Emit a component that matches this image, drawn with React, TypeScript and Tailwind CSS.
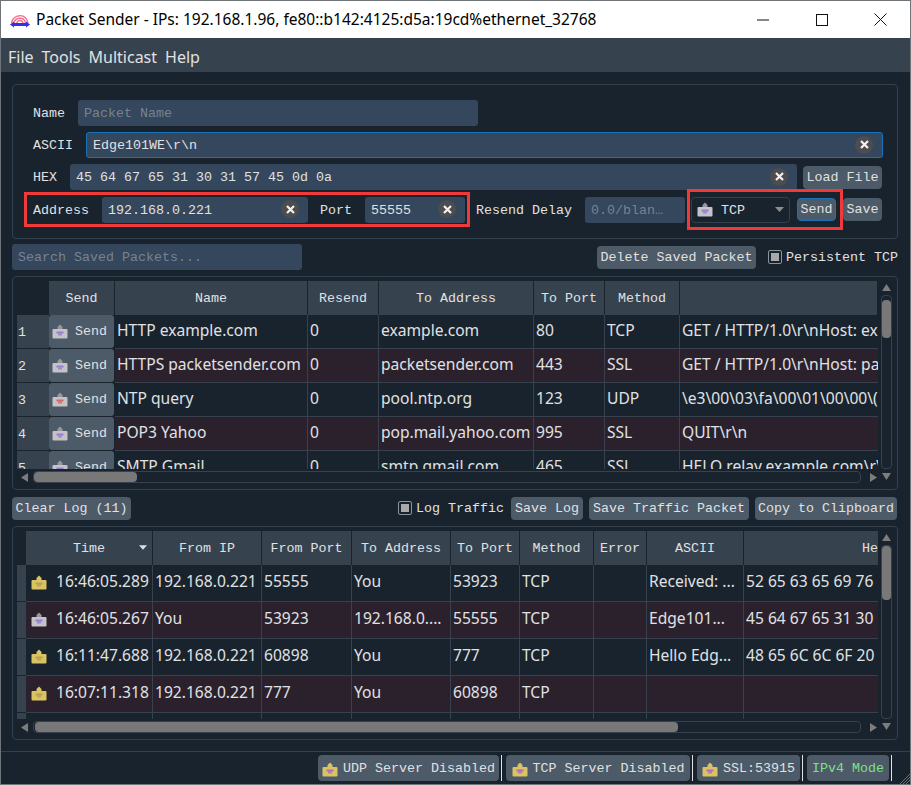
import type { ReactNode } from "react";

const ui = "font-['Noto_Sans',sans-serif]";
const mono = "font-['Liberation_Mono',monospace] text-[13.33px]";
const packetCols = "grid-cols-[32px_66px_193px_71px_155px_71px_75px_198px]";
const logCols = "grid-cols-[9px_127px_109px_90px_99px_69px_74px_53px_97px_134px]";

const packets = [
    ["HTTP example.com", "0", "example.com", "80", "TCP", "GET / HTTP/1.0\\r\\nHost: ex"],
    ["HTTPS packetsender.com", "0", "packetsender.com", "443", "SSL", "GET / HTTP/1.0\\r\\nHost: pa"],
    ["NTP query", "0", "pool.ntp.org", "123", "UDP", "\\e3\\00\\03\\fa\\00\\01\\00\\00\\("],
    ["POP3 Yahoo", "0", "pop.mail.yahoo.com", "995", "SSL", "QUIT\\r\\n"],
    ["SMTP Gmail", "0", "smtp.gmail.com", "465", "SSL", "HELO relay.example.com\\r\\"],
];

const logs = [
    ["16:46:05.289", "192.168.0.221", "55555", "You", "53923", "TCP", "", "Received: ...", "52 65 63 65 69 76"],
    ["16:46:05.267", "You", "53923", "192.168.0....", "55555", "TCP", "", "Edge101...", "45 64 67 65 31 30"],
    ["16:11:47.688", "192.168.0.221", "60898", "You", "777", "TCP", "", "Hello Edg...", "48 65 6C 6C 6F 20"],
    ["16:07:11.318", "192.168.0.221", "777", "You", "60898", "TCP", "", "", ""],
    ["", "", "", "", "", "", "", "", ""],
];

function PacketIcon({ body = "#c6c3c8", mark = "#8f78d6", top = "#9a979c" }: { body?: string; mark?: string; top?: string }) {
    return (
        <svg width="16" height="15" viewBox="0 0 16 15" className="shrink-0">
            <path d="M8 0.5 L10.5 3 V6 H5.5 V3 Z" fill={top} />
            <rect x="0.5" y="5" width="15" height="9.5" rx="1" fill={body} />
            <rect x="4.5" y="7.5" width="7" height="2" fill={mark} opacity="0.9" />
            <rect x="6" y="9.5" width="4" height="2" fill={mark} opacity="0.75" />
        </svg>
    );
}

function Logo() {
    return (
        <svg width="20" height="16" viewBox="0 0 20 16" className="shrink-0">
            <g fill="none" stroke="#f4708f" strokeWidth="1.4">
                <path d="M1.5 11 C3 2.5 15.5 0 18 11" />
                <path d="M4 11 C5 5.5 14 4 15.5 11" />
                <path d="M6.5 11 C7.5 8 12 7.5 13 11" />
            </g>
            <path d="M0 12.5 L4 9.5 V11 H16 V9.5 L20 12.5 L16 15.5 V14 H4 V15.5 Z" fill="#2a35e0" />
        </svg>
    );
}

function ClearMark() {
    return (
        <span className="w-[18px] h-[18px] mb-[1px] shrink-0 rounded-full bg-[#4d4d4f] flex items-center justify-center">
            <svg width="9" height="9" viewBox="0 0 9 9">
                <path d="M1 1 L8 8 M8 1 L1 8" stroke="#f2f2f2" strokeWidth="2.2" />
            </svg>
        </span>
    );
}

function Field({ text, muted, clear, className }: { text: string; muted?: boolean; clear?: boolean; className: string }) {
    return (
        <div className={`h-[26px] rounded-[3px] bg-[#34475c] flex items-center pl-[6px] pr-[9px] ${className}`}>
            <span className={`flex-1 pt-[2px] whitespace-pre overflow-hidden ${muted ? "text-[#77838f]" : "text-[#e0e1e3]"}`}>{text}</span>
            {clear && <ClearMark />}
        </div>
    );
}

function Btn({ children, className = "" }: { children: ReactNode; className?: string }) {
    return (
        <div className={`h-[23px] pt-[1px] rounded-[4px] bg-[#4d5a67] text-[#e0e1e3] flex items-center justify-center whitespace-pre ${className}`}>
            {children}
        </div>
    );
}

function Check({ className = "" }: { className?: string }) {
    return (
        <span className={`w-[14px] h-[14px] shrink-0 rounded-[2px] border border-[#8a949c] flex items-center justify-center ${className}`}>
            <span className="w-[8px] h-[8px] bg-[#a9a9a9]" />
        </span>
    );
}

function Arrow({ dir }: { dir: "up" | "down" | "left" | "right" }) {
    const d = { up: "M0 7 L4.5 0 L9 7 Z", down: "M0 0 L9 0 L4.5 7 Z", left: "M7 0 V9 L0 4.5 Z", right: "M0 0 V9 L7 4.5 Z" }[dir];
    const size = dir === "up" || dir === "down" ? "w-[9px] h-[7px]" : "w-[7px] h-[9px]";
    return (
        <svg viewBox={dir === "up" || dir === "down" ? "0 0 9 7" : "0 0 7 9"} className={`${size} shrink-0`}>
            <path d={d} fill="#7d7d7d" />
        </svg>
    );
}

function HScroll({ thumb }: { thumb: string }) {
    return (
        <div className="h-[12px] mt-[2px] flex items-center">
            <div className="w-[16px] pl-[4px] flex"><Arrow dir="left" /></div>
            <div className="flex-1 h-[12px] rounded-[4px] border border-[#37424e]">
                <div className={`h-full rounded-[4px] bg-[#787878] ${thumb}`} />
            </div>
            <div className="w-[17px] pl-[9px] flex"><Arrow dir="right" /></div>
        </div>
    );
}

function VScroll({ thumb }: { thumb: string }) {
    return (
        <div className="w-[17px] flex flex-col items-center pl-[2px] pr-[3px]">
            <div className="h-[14px] pt-[3px] flex"><Arrow dir="up" /></div>
            <div className="flex-1 w-[11px] rounded-[4px] border border-[#37424e]">
                <div className={`w-full rounded-[4px] bg-[#787878] ${thumb}`} />
            </div>
            <div className="h-[14px] pt-[4px] flex"><Arrow dir="down" /></div>
        </div>
    );
}

function PacketTable() {
    const heads = ["", "Send", "Name", "Resend", "To Address", "To Port", "Method", ""];
    return (
        <div className="h-[188px] overflow-hidden">
            <div className={`grid ${packetCols} h-[34px]`}>
                {heads.map((h, i) => (
                    <div key={i} className={`${mono} pt-[2px] text-[#e0e1e3] flex items-center justify-center ${i === 0 ? "" : "bg-[#36434f] border-r border-[#19232d]"}`}>
                        {h}
                    </div>
                ))}
            </div>
            {packets.map((row, r) => (
                <div key={r} className={`grid ${packetCols} h-[34px]`}>
                    <div className={`${mono} bg-[#36434f] text-[#e0e1e3] pl-[1px] pt-[8px] border-b border-[#19232d]`}>{r + 1}</div>
                    <div className="bg-[#4d5a67] rounded-[3px] mb-[1px] mr-[1px] flex items-center pl-[3px] gap-[7px]">
                        <PacketIcon mark={r === 2 ? "#d0605f" : "#8f78d6"} />
                        <span className={`${mono} text-[#e0e1e3]`}>Send</span>
                    </div>
                    {row.map((cell, c) => (
                        <div key={c} className={`${ui} text-[15.6px] pb-[2px] text-[#e0e1e3] whitespace-pre overflow-hidden pl-[2px] flex items-center border-b border-[#37424e] ${c === 5 ? "" : "border-r"} ${r % 2 === 1 ? "bg-[#2b212d]" : ""}`}>
                            {cell}
                        </div>
                    ))}
                </div>
            ))}
        </div>
    );
}

function LogTable() {
    const heads = ["", "Time", "From IP", "From Port", "To Address", "To Port", "Method", "Error", "ASCII", "He"];
    return (
        <div className="h-[188px] overflow-hidden">
            <div className={`grid ${logCols} h-[34px]`}>
                {heads.map((h, i) => (
                    <div key={i} className={`${mono} pt-[2px] text-[#e0e1e3] relative flex items-center ${i === 9 ? "justify-end" : "justify-center"} ${i === 0 ? "" : "bg-[#36434f]"} ${i === 0 || i === 9 ? "" : "border-r border-[#19232d]"}`}>
                        {h}
                        {i === 1 && (
                            <svg viewBox="0 0 9 5" className="absolute right-[5px] top-[14px] w-[8px] h-[5px]">
                                <path d="M0 0 H9 L4.5 5 Z" fill="#e0e1e3" />
                            </svg>
                        )}
                    </div>
                ))}
            </div>
            {logs.map((row, r) => (
                <div key={r} className={`grid ${logCols} h-[37px]`}>
                    <div className="bg-[#36434f] border-b border-[#19232d]" />
                    {row.map((cell, c) => (
                        <div key={c} className={`${ui} text-[15.6px] pb-[2px] text-[#e0e1e3] whitespace-pre overflow-hidden pl-[2px] flex items-center border-b border-[#37424e] ${c === 8 ? "" : "border-r"} ${c === 0 ? "gap-[9px] pl-[5px]" : ""} ${r % 2 === 1 ? "bg-[#2b212d]" : ""}`}>
                            {c === 0 && cell && <PacketIcon body={r === 1 ? "#c6c3c8" : "#d9c463"} top={r === 1 ? "#9a979c" : "#d9c463"} mark={r === 1 ? "#8f78d6" : "#b89a50"} />}
                            {cell}
                        </div>
                    ))}
                </div>
            ))}
        </div>
    );
}

function StatusItem({ label, green, className }: { label: string; green?: boolean; className: string }) {
    return (
        <div className="flex items-center h-[26px]">
            <div className={`h-[26px] pt-[2px] rounded-[4px] bg-[#4d5a67] flex items-center gap-[5px] justify-center ${green ? "text-[#7fe08a]" : "text-[#e0e1e3]"} ${className}`}>
                {!green && <PacketIcon body="#d9c463" top="#d9c463" mark="#b060c0" />}
                {label}
            </div>
            <div className="w-px h-[26px] bg-[#dfe1e3] ml-[2px]" />
        </div>
    );
}

export default function App() {
    return (
        <div className={`w-[911px] h-[785px] overflow-hidden flex flex-col bg-[#19232d] border-l border-t border-r border-b border-[#6f7479] ${mono}`}>
            <div className="h-[37px] shrink-0 bg-white flex items-center text-black">
                <div className="pl-[9px] pr-[6px] flex"><Logo /></div>
                <span className={`${ui} text-[15.5px] flex-1 whitespace-pre`}>Packet Sender - IPs: 192.168.1.96, fe80::b142:4125:d5a:19cd%ethernet_32768</span>
                <div className="flex items-center">
                    <div className="w-[59px] flex justify-center">
                        <svg width="12" height="12" viewBox="0 0 12 12"><path d="M0 6 H12" stroke="#111" /></svg>
                    </div>
                    <div className="w-[59px] flex justify-center">
                        <svg width="12" height="12" viewBox="0 0 12 12"><rect x="0.5" y="0.5" width="11" height="11" fill="none" stroke="#111" /></svg>
                    </div>
                    <div className="w-[59px] flex justify-center">
                        <svg width="13" height="13" viewBox="0 0 13 13"><path d="M0.5 0.5 L12.5 12.5 M12.5 0.5 L0.5 12.5" stroke="#111" /></svg>
                    </div>
                </div>
            </div>

            <div className={`h-[34px] pt-[3px] shrink-0 bg-[#36434f] text-[#e0e1e3] flex items-center gap-[8px] pl-[7px] ${ui} text-[16px]`}>
                <span>File</span>
                <span>Tools</span>
                <span>Multicast</span>
                <span>Help</span>
            </div>

            <div className="flex-1 flex flex-col pl-[11px] pr-[12px] text-[#e0e1e3]">
                <div className="mt-[12px] h-[155px] shrink-0 rounded-[4px] border border-[#32414b] pl-[11px] pr-[14px] pt-[15px]">
                    <div className="flex items-center pl-[9px] gap-[6px]">
                        <span className="w-[39px] pt-[2px]">Name</span>
                        <Field text="Packet Name" muted className="w-[400px]" />
                    </div>
                    <div className="flex items-center pl-[9px] gap-[13px] mt-[6px]">
                        <span className="w-[40px] pt-[2px]">ASCII</span>
                        <Field text="Edge101WE\r\n" clear className="flex-1 border border-[#1a72bb]" />
                    </div>
                    <div className="flex items-center pl-[9px] mt-[6px]">
                        <span className="w-[37px] pt-[2px]">HEX</span>
                        <Field text="45 64 67 65 31 30 31 57 45 0d 0a" clear className="w-[727px]" />
                        <Btn className="w-[79px] ml-[6px]">Load File</Btn>
                    </div>
                    <div className="flex items-center mt-[2px] h-[35px]">
                        <div className="w-[446px] h-[35px] shrink-0 border-[3px] border-[#f03a3a] flex items-center pl-[6px]">
                            <span className="w-[69px] pt-[2px]">Address</span>
                            <Field text="192.168.0.221" clear className="w-[206px]" />
                            <span className="ml-[12px] w-[45px] pt-[2px]">Port</span>
                            <Field text="55555" clear className="w-[100px]" />
                        </div>
                        <span className="ml-[6px] w-[109px] pt-[2px]">Resend Delay</span>
                        <Field text="0.0/blan…" muted className="w-[100px]" />
                        <div className="w-[156px] h-[41px] -my-[3px] ml-[2px] shrink-0 border-[3px] border-[#f03a3a] flex items-center pl-[1px]">
                            <div className="w-[99px] h-[26px] rounded-[4px] border border-[#32414b] flex items-center pl-[5px] gap-[8px]">
                                <PacketIcon />
                                <span className="flex-1 pt-[2px]">TCP</span>
                                <svg width="9" height="5" viewBox="0 0 9 5" className="mr-[5px]"><path d="M0 0 H9 L4.5 5 Z" fill="#8d8d8d" /></svg>
                            </div>
                            <Btn className="w-[39px] ml-[7px] border border-[#1a72bb]">Send</Btn>
                        </div>
                        <Btn className="w-[39px]">Save</Btn>
                    </div>
                </div>

                <div className="mt-[5px] h-[26px] shrink-0 flex items-center">
                    <Field text="Search Saved Packets..." muted className="w-[290px]" />
                    <Btn className="w-[159px] ml-[295px]">Delete Saved Packet</Btn>
                    <Check className="ml-[12px]" />
                    <span className="ml-[4px] pt-[2px] whitespace-pre">Persistent TCP</span>
                </div>

                <div className="mt-[6px] h-[214px] shrink-0 rounded-[4px] border border-[#32414b] pl-[4px] pt-[4px] flex">
                    <div className="w-[861px] shrink-0">
                        <PacketTable />
                        <HScroll thumb="w-[103px]" />
                    </div>
                    <div className="h-[202px] flex"><VScroll thumb="h-[38px] mt-[4px]" /></div>
                </div>

                <div className="mt-[7px] h-[22px] shrink-0 flex items-center">
                    <Btn className="w-[119px]">Clear Log (11)</Btn>
                    <Check className="ml-[267px]" />
                    <span className="ml-[4px] pt-[2px] w-[93px] whitespace-pre">Log Traffic</span>
                    <Btn className="w-[72px] ml-[2px]">Save Log</Btn>
                    <Btn className="w-[160px] ml-[6px]">Save Traffic Packet</Btn>
                    <Btn className="w-[142px] ml-[6px]">Copy to Clipboard</Btn>
                </div>

                <div className="mt-[7px] h-[214px] shrink-0 rounded-[4px] border border-[#32414b] pl-[4px] pt-[4px] flex">
                    <div className="w-[861px] shrink-0">
                        <LogTable />
                        <HScroll thumb="w-[643px] ml-[1px]" />
                    </div>
                    <div className="h-[202px] flex"><VScroll thumb="h-[54px]" /></div>
                </div>
            </div>

            <div className="h-[33px] shrink-0 border-t border-[#32414b] flex items-center justify-end gap-[4px] pr-[18px] relative">
                <StatusItem label="UDP Server Disabled" className="w-[181px]" />
                <StatusItem label="TCP Server Disabled" className="w-[184px]" />
                <StatusItem label="SSL:53915" className="w-[103px]" />
                <StatusItem label="IPv4 Mode" green className="w-[82px]" />
                <svg width="11" height="11" viewBox="0 0 11 11" className="absolute right-0 bottom-0">
                    <path d="M11 1 L1 11 M11 4 L4 11 M11 7 L7 11" stroke="#6a737b" />
                </svg>
            </div>
        </div>
    );
}
